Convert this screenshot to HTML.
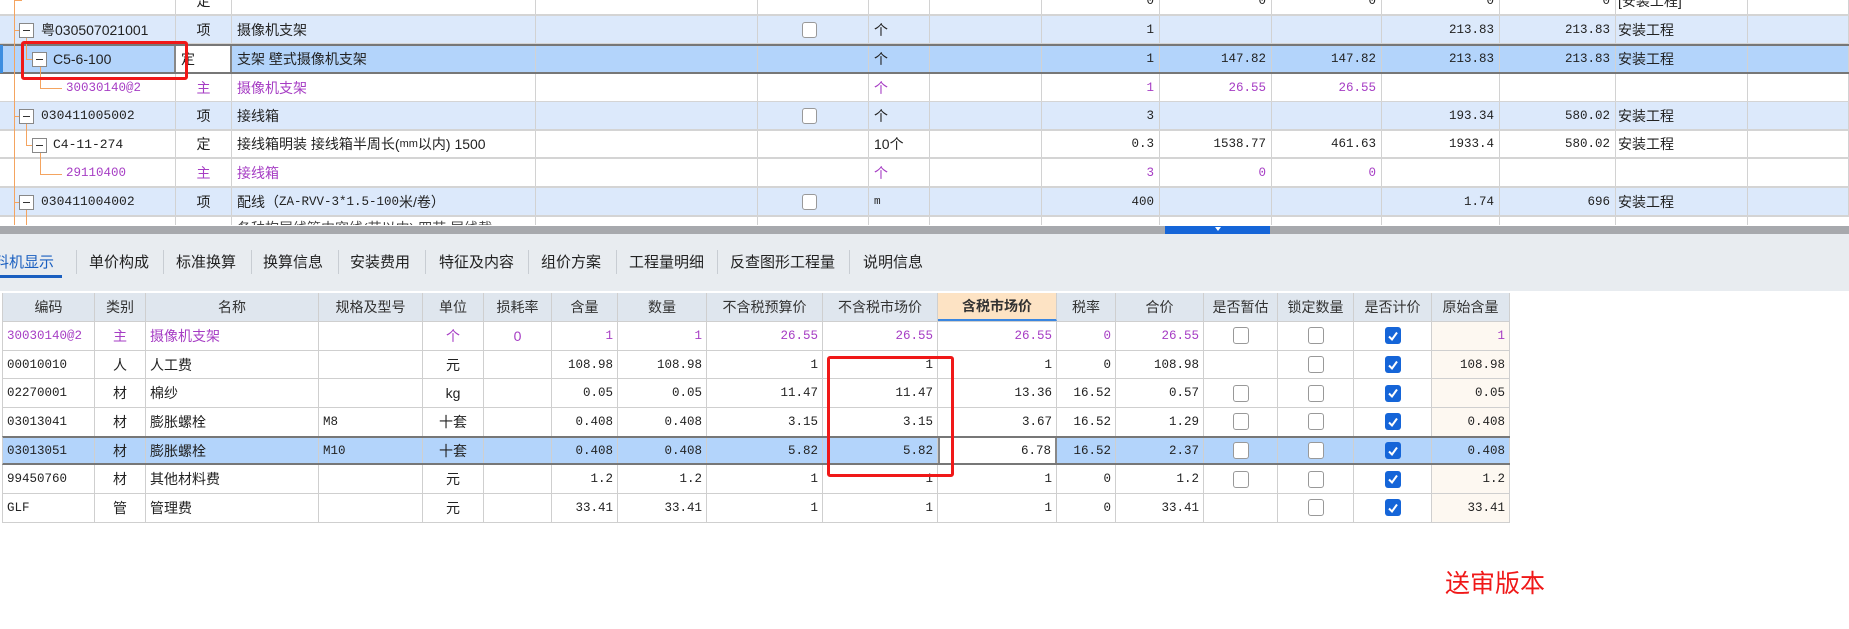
<!DOCTYPE html>
<html><head><meta charset="utf-8">
<style>
*{margin:0;padding:0;box-sizing:border-box}
body{width:1849px;height:629px;overflow:hidden;background:#fff;position:relative;font-family:"Liberation Sans","Noto Sans CJK SC",sans-serif;color:#222}
.top{position:absolute;left:0;top:0;width:1849px;height:225px;overflow:hidden;background:#fff}
.r{position:absolute;left:0;width:1849px;display:flex;border-bottom:2px solid #d4d4d4}
.c{height:100%;border-right:1px solid #d2d2d2;font-size:14px;display:flex;align-items:center;padding:0 5px;white-space:nowrap;overflow:hidden;position:relative}
.n{justify-content:flex-end;font-family:"Liberation Mono","Noto Sans CJK SC",monospace;font-size:12.5px}
.m{font-family:"Liberation Mono","Noto Sans CJK SC",monospace;font-size:12.5px}
.ct{justify-content:center}
.hl{background:#dce9fb}
.sel{background:#b3d4fb;border-top:2px solid #777;border-bottom:2px solid #777}
.pu{color:#a63dc4}
.cb{width:15px;height:16px;border:1px solid #999;border-radius:3px;background:#fff;display:inline-block}
.ck{width:16px;height:17px;border-radius:3px;background:#1565d8;display:inline-flex;align-items:center;justify-content:center}
.box{position:absolute;width:15px;height:15px;border:1px solid #888;background:#fff}
.box:after{content:"";position:absolute;left:3px;right:3px;top:6px;height:1px;background:#333}
.ol{position:absolute;background:#f4a460}
.bar{position:absolute;left:0;top:226px;width:1849px;height:8px;background:#a7a9ad}
.tabs{position:absolute;left:0;top:234px;width:1849px;height:57px;background:#e8ecf0}
.tab{position:absolute;top:17px;font-size:15px;color:#222}
.sep{position:absolute;top:16px;width:1px;height:24px;background:#c8cdd3}
.bt{position:absolute;left:2px;top:293px}
.br{display:flex;height:28.7px;border-bottom:1px solid #cfcfcf}
.bc{height:100%;border-right:1px solid #cfcfcf;font-size:14px;display:flex;align-items:center;padding:0 4px;white-space:nowrap;overflow:hidden}
.bc.m{font-family:"Liberation Mono","Noto Sans CJK SC",monospace;font-size:12.5px}
.bh{background:#dfe6ee;justify-content:center;font-size:14px;color:#333}
</style></head><body>
<div class="top">
<div class="r" style="top:-13px;height:29px">
<div class="c" style="width:176px"></div><div class="c ct" style="width:56px">定</div><div class="c" style="width:304px"></div><div class="c" style="width:222px"></div><div class="c" style="width:111px"></div><div class="c" style="width:61px"></div><div class="c" style="width:112px"></div><div class="c n" style="width:118px">0</div><div class="c n" style="width:112px">0</div><div class="c n" style="width:110px">0</div><div class="c n" style="width:118px">0</div><div class="c n" style="width:116px">0</div><div class="c" style="width:132px;padding-left:2px">[安装工程]</div><div class="c" style="width:101px"></div></div>
<div class="r hl" style="top:16px;height:29px">
<div class="c" style="width:176px;padding-left:41px">粤030507021001</div><div class="c ct" style="width:56px">项</div><div class="c" style="width:304px">摄像机支架</div><div class="c" style="width:222px"></div><div class="c" style="width:111px;padding-left:44px"><span class="cb"></span></div><div class="c" style="width:61px">个</div><div class="c" style="width:112px"></div><div class="c n" style="width:118px">1</div><div class="c n" style="width:112px"></div><div class="c n" style="width:110px"></div><div class="c n" style="width:118px">213.83</div><div class="c n" style="width:116px">213.83</div><div class="c" style="width:132px;padding-left:2px">安装工程</div><div class="c" style="width:101px"></div></div>
<div class="r sel" style="top:44px;height:30px">
<div class="c" style="width:176px;padding-left:53px;border-right:2px solid #888" >C5-6-100</div><div class="c" style="width:56px;background:#fff;border-right:2px solid #888">定</div><div class="c" style="width:304px">支架 壁式摄像机支架</div><div class="c" style="width:222px"></div><div class="c" style="width:111px"></div><div class="c" style="width:61px">个</div><div class="c" style="width:112px"></div><div class="c n" style="width:118px">1</div><div class="c n" style="width:112px">147.82</div><div class="c n" style="width:110px">147.82</div><div class="c n" style="width:118px">213.83</div><div class="c n" style="width:116px">213.83</div><div class="c" style="width:132px;padding-left:2px">安装工程</div><div class="c" style="width:101px"></div></div>
<div class="r pu" style="top:74px;height:29px">
<div class="c m" style="width:176px;padding-left:66px">30030140@2</div><div class="c ct" style="width:56px">主</div><div class="c" style="width:304px">摄像机支架</div><div class="c" style="width:222px"></div><div class="c" style="width:111px"></div><div class="c" style="width:61px">个</div><div class="c" style="width:112px"></div><div class="c n" style="width:118px">1</div><div class="c n" style="width:112px">26.55</div><div class="c n" style="width:110px">26.55</div><div class="c n" style="width:118px"></div><div class="c n" style="width:116px"></div><div class="c" style="width:132px"></div><div class="c" style="width:101px"></div></div>
<div class="r hl" style="top:102px;height:29px">
<div class="c m" style="width:176px;padding-left:41px;font-size:13px">030411005002</div><div class="c ct" style="width:56px">项</div><div class="c" style="width:304px">接线箱</div><div class="c" style="width:222px"></div><div class="c" style="width:111px;padding-left:44px"><span class="cb"></span></div><div class="c" style="width:61px">个</div><div class="c" style="width:112px"></div><div class="c n" style="width:118px">3</div><div class="c n" style="width:112px"></div><div class="c n" style="width:110px"></div><div class="c n" style="width:118px">193.34</div><div class="c n" style="width:116px">580.02</div><div class="c" style="width:132px;padding-left:2px">安装工程</div><div class="c" style="width:101px"></div></div>
<div class="r" style="top:131px;height:28px">
<div class="c m" style="width:176px;padding-left:53px;font-size:13px">C4-11-274</div><div class="c ct" style="width:56px">定</div><div class="c" style="width:304px">接线箱明装 接线箱半周长(<span style="font-size:11px">mm</span>以内) 1500</div><div class="c" style="width:222px"></div><div class="c" style="width:111px"></div><div class="c" style="width:61px">10个</div><div class="c" style="width:112px"></div><div class="c n" style="width:118px">0.3</div><div class="c n" style="width:112px">1538.77</div><div class="c n" style="width:110px">461.63</div><div class="c n" style="width:118px">1933.4</div><div class="c n" style="width:116px">580.02</div><div class="c" style="width:132px;padding-left:2px">安装工程</div><div class="c" style="width:101px"></div></div>
<div class="r pu" style="top:159px;height:29px">
<div class="c m" style="width:176px;padding-left:66px">29110400</div><div class="c ct" style="width:56px">主</div><div class="c" style="width:304px">接线箱</div><div class="c" style="width:222px"></div><div class="c" style="width:111px"></div><div class="c" style="width:61px">个</div><div class="c" style="width:112px"></div><div class="c n" style="width:118px">3</div><div class="c n" style="width:112px">0</div><div class="c n" style="width:110px">0</div><div class="c n" style="width:118px"></div><div class="c n" style="width:116px"></div><div class="c" style="width:132px"></div><div class="c" style="width:101px"></div></div>
<div class="r hl" style="top:188px;height:29px">
<div class="c m" style="width:176px;padding-left:41px;font-size:13px">030411004002</div><div class="c ct" style="width:56px">项</div><div class="c" style="width:304px">配线（<span class="m">ZA-RVV-3*1.5-100</span>米/卷）</div><div class="c" style="width:222px"></div><div class="c" style="width:111px;padding-left:44px"><span class="cb"></span></div><div class="c m" style="width:61px;font-size:11px">m</div><div class="c" style="width:112px"></div><div class="c n" style="width:118px">400</div><div class="c n" style="width:112px"></div><div class="c n" style="width:110px"></div><div class="c n" style="width:118px">1.74</div><div class="c n" style="width:116px">696</div><div class="c" style="width:132px;padding-left:2px">安装工程</div><div class="c" style="width:101px"></div></div>
<div class="r" style="top:217px;height:14px;border:none">
<div class="c" style="width:176px"></div><div class="c" style="width:56px"></div><div class="c" style="width:304px;align-items:flex-start;padding-top:1px;color:#444">各种构层线管内穿线(芯以内) 四芯 层线截</div><div class="c" style="width:222px"></div><div class="c" style="width:111px"></div><div class="c" style="width:61px"></div><div class="c" style="width:112px"></div><div class="c" style="width:118px"></div><div class="c" style="width:112px"></div><div class="c" style="width:110px"></div><div class="c" style="width:118px"></div><div class="c" style="width:116px"></div><div class="c" style="width:132px"></div></div>
<div class="ol" style="left:14px;top:0;width:1px;height:225px"></div>
<div class="ol" style="left:14px;top:0;width:8px;height:1px"></div>
<div class="ol" style="left:14px;top:30px;width:6px;height:1px"></div>
<div class="ol" style="left:14px;top:116px;width:6px;height:1px"></div>
<div class="ol" style="left:14px;top:202px;width:6px;height:1px"></div>
<div class="ol" style="left:26px;top:38px;width:1px;height:22px"></div>
<div class="ol" style="left:26px;top:59px;width:6px;height:1px"></div>
<div class="ol" style="left:40px;top:66px;width:1px;height:22px"></div>
<div class="ol" style="left:40px;top:88px;width:22px;height:1px"></div>
<div class="ol" style="left:26px;top:124px;width:1px;height:22px"></div>
<div class="ol" style="left:26px;top:145px;width:6px;height:1px"></div>
<div class="ol" style="left:40px;top:152px;width:1px;height:22px"></div>
<div class="ol" style="left:40px;top:174px;width:22px;height:1px"></div>
<div class="ol" style="left:26px;top:210px;width:1px;height:15px"></div>
<div class="box" style="left:19px;top:23px"></div>
<div class="box" style="left:32px;top:52px"></div>
<div class="box" style="left:19px;top:109px"></div>
<div class="box" style="left:32px;top:138px"></div>
<div class="box" style="left:19px;top:195px"></div>
<div style="position:absolute;left:0;top:45px;width:3px;height:28px;background:#3c8de0"></div>
<div style="position:absolute;left:21px;top:41px;width:167px;height:39px;border:3px solid #f01818;border-radius:3px"></div>
</div>
<div class="bar"></div>
<div style="position:absolute;left:1165px;top:226px;width:105px;height:8px;background:#1565d8"></div>
<div style="position:absolute;left:1215px;top:227px;width:0;height:0;border-left:3px solid transparent;border-right:3px solid transparent;border-top:4px solid #fff"></div>
<div class="tabs">
<div class="tab" style="left:-6px;color:#1a5fc0">料机显示</div>
<div style="position:absolute;left:0;top:41px;width:62px;height:3px;background:#1a5fc0"></div>
<div class="sep" style="left:76px"></div><div class="tab" style="left:89px">单价构成</div>
<div class="sep" style="left:163px"></div><div class="tab" style="left:176px">标准换算</div>
<div class="sep" style="left:251px"></div><div class="tab" style="left:263px">换算信息</div>
<div class="sep" style="left:338px"></div><div class="tab" style="left:350px">安装费用</div>
<div class="sep" style="left:425px"></div><div class="tab" style="left:439px">特征及内容</div>
<div class="sep" style="left:528px"></div><div class="tab" style="left:541px">组价方案</div>
<div class="sep" style="left:616px"></div><div class="tab" style="left:629px">工程量明细</div>
<div class="sep" style="left:717px"></div><div class="tab" style="left:730px">反查图形工程量</div>
<div class="sep" style="left:849px"></div><div class="tab" style="left:863px">说明信息</div>
</div>
<div class="bt">
<div class="br" style="border-left:1px solid #cfcfcf">
<div class="bc bh" style="width:92px">编码</div><div class="bc bh" style="width:51px">类别</div><div class="bc bh" style="width:173px">名称</div><div class="bc bh" style="width:104px">规格及型号</div><div class="bc bh" style="width:61px">单位</div><div class="bc bh" style="width:68px">损耗率</div><div class="bc bh" style="width:66px">含量</div><div class="bc bh" style="width:89px">数量</div><div class="bc bh" style="width:116px">不含税预算价</div><div class="bc bh" style="width:115px">不含税市场价</div><div class="bc bh" style="width:119px;background:#fde3c4;font-weight:bold;border-bottom:2px solid #3a86e0">含税市场价</div><div class="bc bh" style="width:59px">税率</div><div class="bc bh" style="width:88px">合价</div><div class="bc bh" style="width:74px">是否暂估</div><div class="bc bh" style="width:76px">锁定数量</div><div class="bc bh" style="width:78px">是否计价</div><div class="bc bh" style="width:78px">原始含量</div></div>
</div>
<div class="bt" id="rows" style="top:322px"></div>
<div style="position:absolute;left:827px;top:356px;width:127px;height:121px;border:3px solid #f01818;border-radius:3px"></div>
<div style="position:absolute;left:1445px;top:569px;font-size:25px;color:#f01818;line-height:30px">送审版本</div>
<script>
var W=[92,51,173,104,61,68,66,89,116,115,119,59,88,74,76,78,78];
var A=['l','c','l','l','c','c','r','r','r','r','r','r','r','x','x','x','r'];
var D=[
['30030140@2','主','摄像机支架','','个','0','1','1','26.55','26.55','26.55','0','26.55',1,1,2,'1','p'],
['00010010','人','人工费','','元','','108.98','108.98','1','1','1','0','108.98',0,1,2,'108.98',''],
['02270001','材','棉纱','','kg','','0.05','0.05','11.47','11.47','13.36','16.52','0.57',1,1,2,'0.05',''],
['03013041','材','膨胀螺栓','M8','十套','','0.408','0.408','3.15','3.15','3.67','16.52','1.29',1,1,2,'0.408',''],
['03013051','材','膨胀螺栓','M10','十套','','0.408','0.408','5.82','5.82','6.78','16.52','2.37',1,1,2,'0.408','s'],
['99450760','材','其他材料费','','元','','1.2','1.2','1','1','1','0','1.2',1,1,2,'1.2',''],
['GLF','管','管理费','','元','','33.41','33.41','1','1','1','0','33.41',0,1,2,'33.41','']];
var h='';
D.forEach(function(r){
 var p=r[17]=='p',s=r[17]=='s';
 h+='<div class="br" style="border-left:1px solid #cfcfcf;'+(s?'background:#b3d4fb;border-top:2px solid #777;border-bottom:2px solid #777;margin-top:-1px;height:29.7px;':'')+(p?'color:#a63dc4;':'')+'">';
 for(var i=0;i<17;i++){
  var v=r[i],a=A[i],st='width:'+W[i]+'px;';
  if(a=='c')st+='justify-content:center;';
  if(a=='r'||a=='x')st+=(a=='r'?'justify-content:flex-end;':'justify-content:center;');
  var cls='bc'+((a=='r'||i==0||i==3)?' m':'');
  if(i==16&&!s)st+='background:#fdf8f1;';
  if(i==10&&s)st+='background:#fff;border-left:2px solid #888;border-right:2px solid #888;';
  var c=v;
  if(a=='x'){c=v==1?'<span class="cb" style="width:16px;height:17px"></span>':v==2?'<span class="ck"><svg width="12" height="12" viewBox="0 0 12 12"><path d="M2 6.5 L5 9.5 L10 2.5" stroke="#fff" stroke-width="2" fill="none"/></svg></span>':'';}
  h+='<div class="'+cls+'" style="'+st+'">'+c+'</div>';
 }
 h+='</div>';
});
document.getElementById('rows').innerHTML=h;
</script>
</body></html>
